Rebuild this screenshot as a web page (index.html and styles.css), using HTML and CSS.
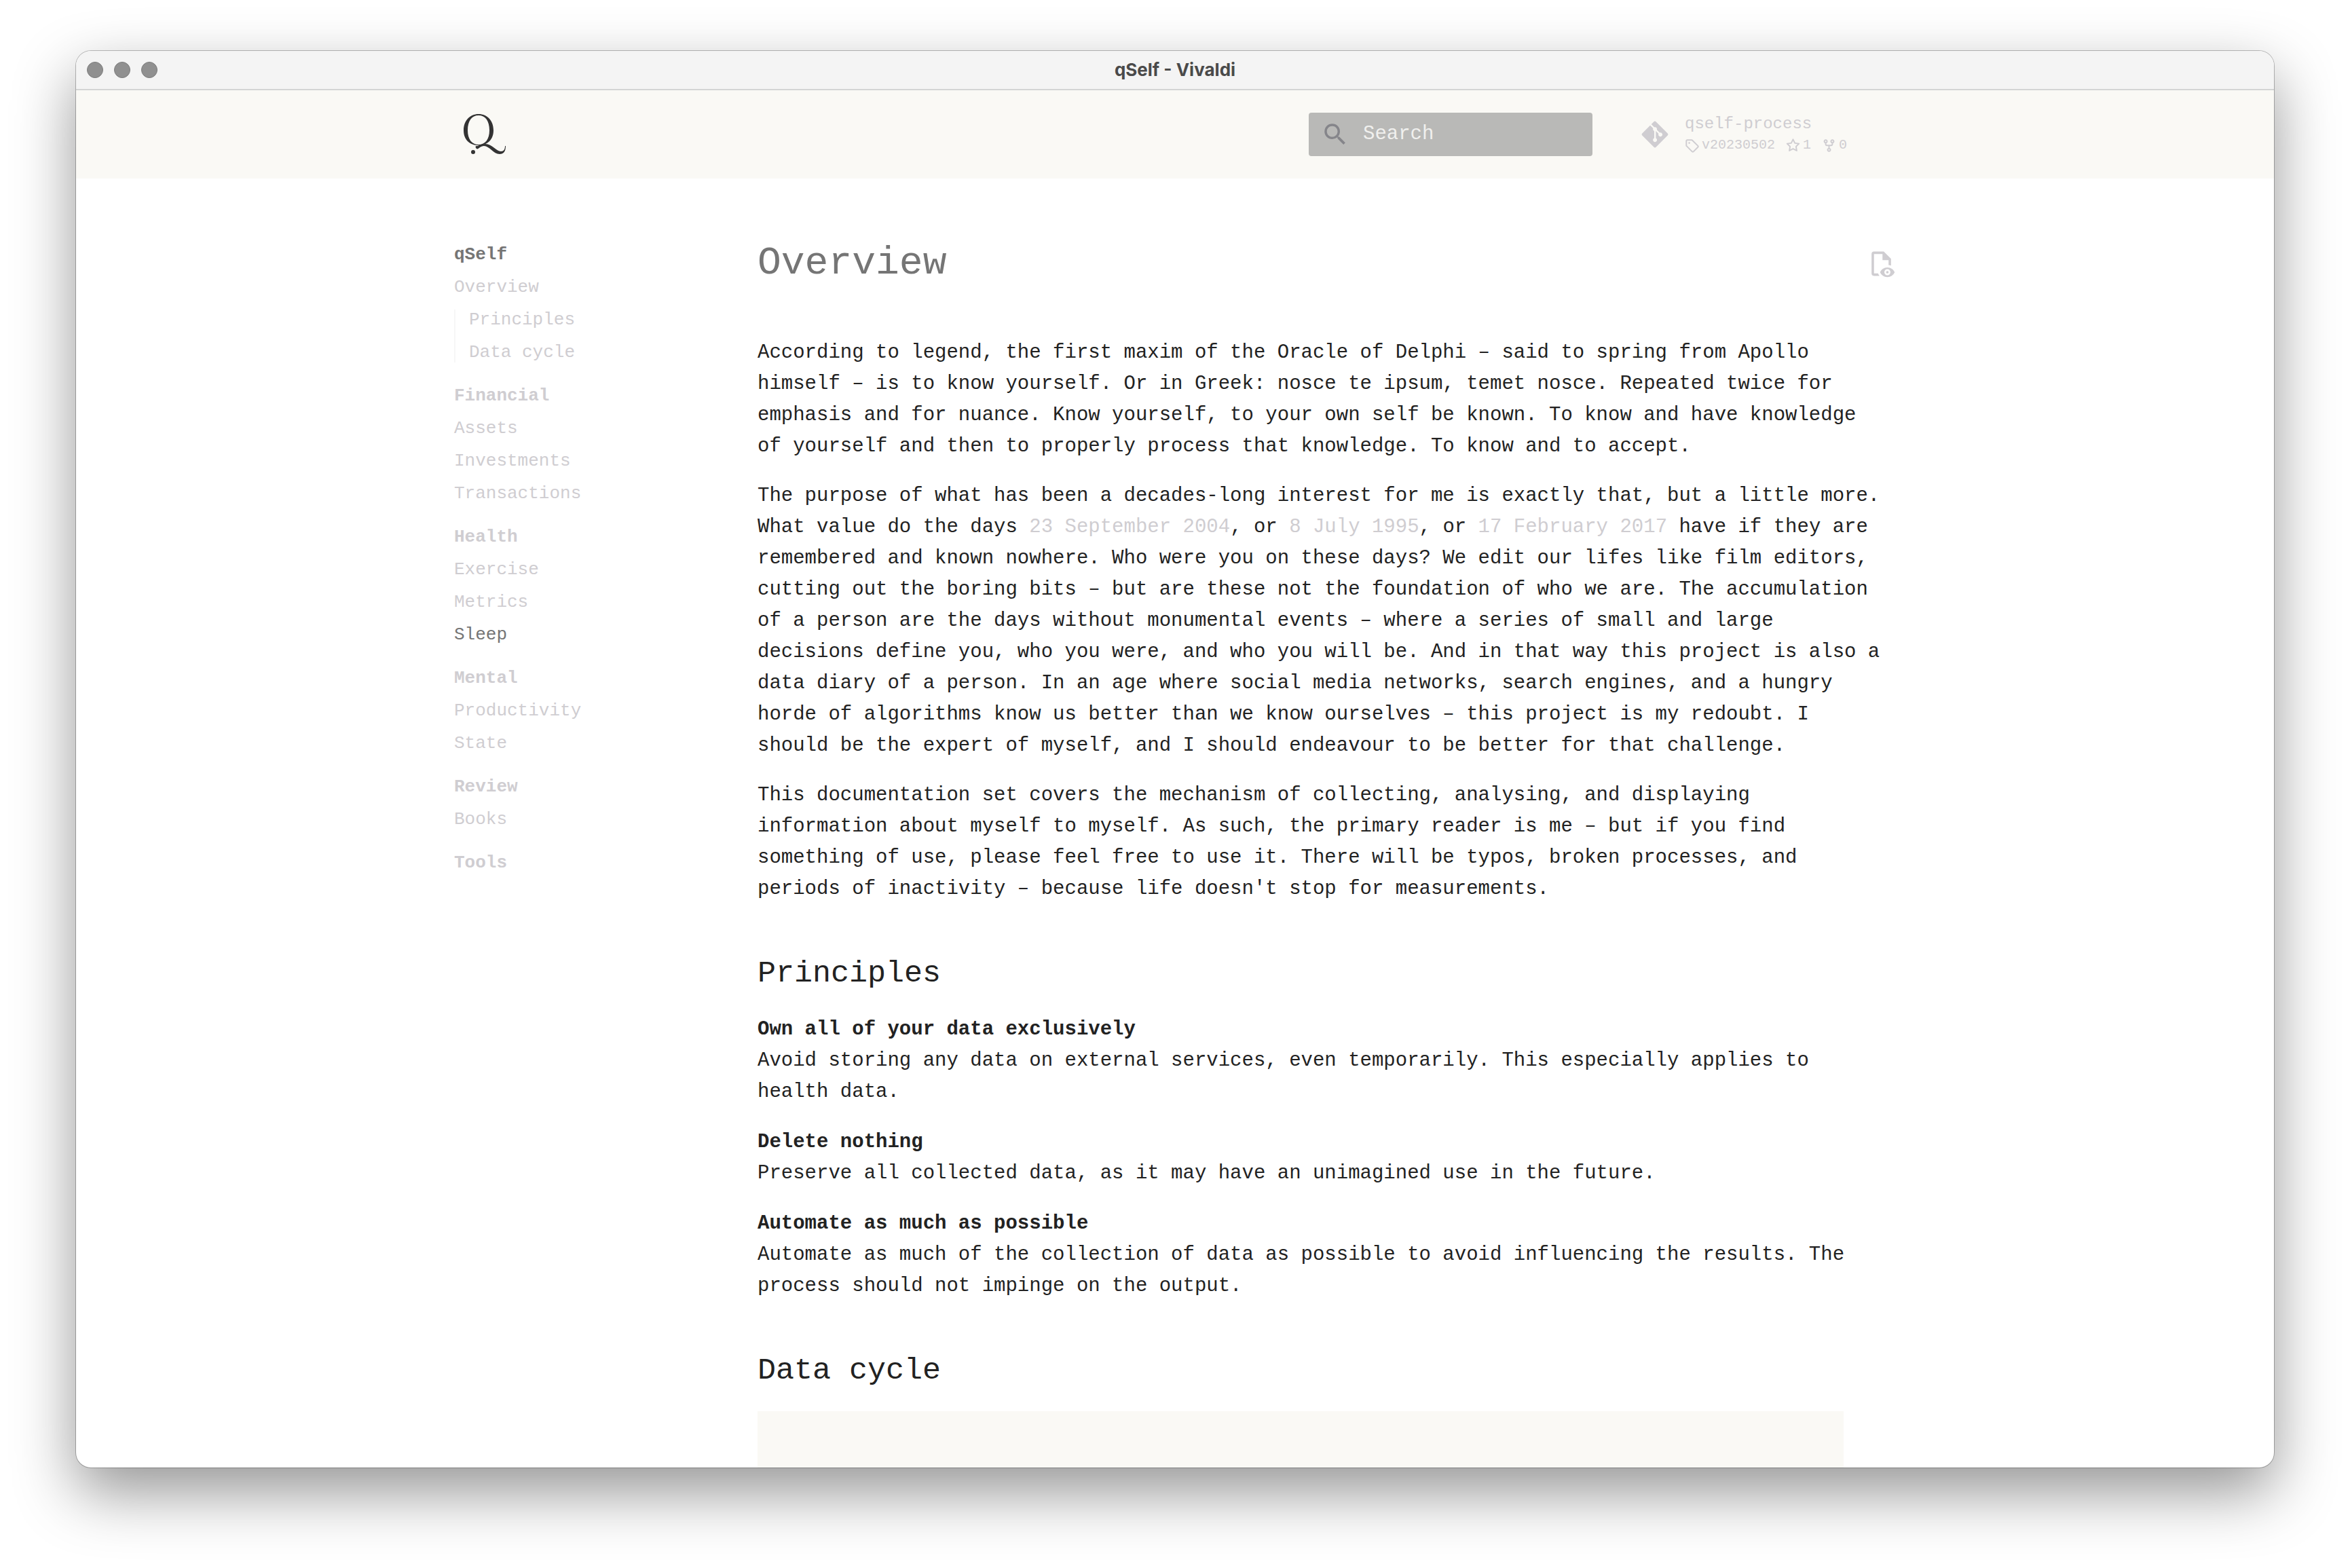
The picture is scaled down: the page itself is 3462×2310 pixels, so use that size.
FILE: index.html
```html
<!DOCTYPE html>
<html lang="en">
<head>
<meta charset="utf-8">
<meta name="viewport" content="width=device-width, initial-scale=1">
<title>qSelf</title>
<link rel="stylesheet" href="styles.css">
</head>
<body>
<div class="window">
  <div class="titlebar">
    <div class="lights">
      <button class="light" type="button" aria-label="Close"></button>
      <button class="light" type="button" aria-label="Minimise"></button>
      <button class="light" type="button" aria-label="Zoom"></button>
    </div>
    <div class="window-title">qSelf - Vivaldi</div>
  </div>

  <header class="header">
    <div class="container header-inner">
      <a class="logo" href="#" aria-label="qSelf">
        <svg viewBox="0 0 64 60" width="64" height="60" aria-hidden="true">
          <path fill-rule="evenodd" d="M23 0C36 0 45 10 45 24C45 38 36 46 23 46C10 46 1 38 1 24C1 10 10 0 23 0ZM23 2C13 2 7 10 7 24C7 37 13 45 23 45C33 45 39 37 39 24C39 10 33 2 23 2Z"/>
          <path d="M19 47C22 48 25 44 33 44C43 44 49 55 56 55C60 55 62 52 62 47L63 47C63 55 60 59 54 59C45 59 39 47 31 47C26 47 24 51 21 51.500C19 51 18 49 19 47Z"/>
          <circle cx="15" cy="56" r="3"/>
        </svg>
      </a>
      <form class="search" role="search">
        <svg class="search-icon" viewBox="0 0 24 24" aria-hidden="true"><path d="M9.500 3A6.500 6.500 0 0 1 16 9.500c0 1.610-.59 3.090-1.560 4.230l.27.27h.79l5 5-1.500 1.500-5-5v-.79l-.27-.27A6.516 6.516 0 0 1 9.500 16 6.500 6.500 0 0 1 3 9.500 6.500 6.500 0 0 1 9.500 3m0 2C7 5 5 7 5 9.500S7 14 9.500 14 14 12 14 9.500 12 5 9.500 5z"/></svg>
        <input class="search-input" type="search" placeholder="Search" aria-label="Search">
      </form>
      <a class="repo" href="#">
        <svg class="repo-icon" viewBox="0 0 448 512" aria-hidden="true"><path d="M439.550 236.050 244 40.450a28.870 28.870 0 0 0-40.810 0l-40.660 40.630 51.520 51.520c27.060-9.140 52.680 16.770 43.390 43.680l49.660 49.660c34.230-11.800 61.180 31 35.470 56.690-26.490 26.490-70.210-2.870-56-37.340L240.220 199v121.850c25.300 12.540 22.260 41.850 9.080 55a34.340 34.340 0 0 1-48.550 0c-17.570-17.600-11.070-46.910 11.250-56v-123c-20.800-8.510-24.600-30.740-18.640-45L142.570 101 8.450 235.140a28.860 28.860 0 0 0 0 40.810l195.610 195.600a28.860 28.860 0 0 0 40.800 0l194.690-194.690a28.860 28.860 0 0 0 0-40.810z"/></svg>
        <span class="repo-info">
          <span class="repo-name">qself-process</span>
          <span class="facts">
            <span class="fact"><svg class="fact-icon" viewBox="0 0 16 16" aria-hidden="true"><path fill-rule="evenodd" d="M2.500 7.775V2.750a.25.25 0 0 1 .25-.25h5.025a.25.25 0 0 1 .177.073l6.250 6.250a.25.25 0 0 1 0 .354l-5.025 5.025a.25.25 0 0 1-.354 0l-6.250-6.250a.25.25 0 0 1-.073-.177zm-1.500 0V2.750C1 1.784 1.784 1 2.750 1h5.025c.464 0 .91.184 1.238.513l6.250 6.250a1.750 1.750 0 0 1 0 2.474l-5.026 5.026a1.750 1.750 0 0 1-2.474 0l-6.250-6.250A1.750 1.750 0 0 1 1 7.775zM6 5a1 1 0 1 1-2 0 1 1 0 0 1 2 0z"/></svg>v20230502</span>
            <span class="fact"><svg class="fact-icon" viewBox="0 0 16 16" aria-hidden="true"><path fill-rule="evenodd" d="M8 .25a.75.75 0 0 1 .673.418l1.882 3.815 4.210.612a.75.75 0 0 1 .416 1.279l-3.046 2.970.719 4.192a.75.75 0 0 1-1.088.791L8 12.347l-3.766 1.980a.75.75 0 0 1-1.088-.79l.72-4.194L.818 6.374a.75.75 0 0 1 .416-1.280l4.210-.611L7.327.668A.75.75 0 0 1 8 .25zm0 2.445L6.615 5.500a.75.75 0 0 1-.564.41l-3.097.45 2.240 2.184a.75.75 0 0 1 .216.664l-.528 3.084 2.769-1.456a.75.75 0 0 1 .698 0l2.770 1.456-.53-3.084a.75.75 0 0 1 .216-.664l2.240-2.183-3.096-.45a.75.75 0 0 1-.564-.41L8 2.694v.001z"/></svg>1</span>
            <span class="fact"><svg class="fact-icon" viewBox="0 0 16 16" aria-hidden="true"><path fill-rule="evenodd" d="M5 3.250a.75.75 0 1 1-1.500 0 .75.75 0 0 1 1.500 0zm0 2.122a2.250 2.250 0 1 0-1.500 0v.878A2.250 2.250 0 0 0 5.750 8.500h1.500v2.128a2.251 2.251 0 1 0 1.500 0V8.500h1.500a2.250 2.250 0 0 0 2.250-2.250v-.878a2.250 2.250 0 1 0-1.500 0v.878a.75.75 0 0 1-.75.75h-4.500A.75.75 0 0 1 5 6.250v-.878zm3.750 7.378a.75.75 0 1 1-1.500 0 .75.75 0 0 1 1.500 0zm3-8.750a.75.75 0 1 0 0-1.500.75.75 0 0 0 0 1.500z"/></svg>0</span>
          </span>
        </span>
      </a>
    </div>
  </header>

  <div class="container page">
    <nav class="nav" aria-label="Documentation">
      <section class="nav-group">
        <a class="nav-heading nav-current" href="#">qSelf</a>
        <a href="#overview">Overview</a>
        <div class="nav-toc">
          <a href="#principles">Principles</a>
          <a href="#data-cycle">Data cycle</a>
        </div>
      </section>
      <section class="nav-group">
        <a class="nav-heading" href="#">Financial</a>
        <a href="#">Assets</a>
        <a href="#">Investments</a>
        <a href="#">Transactions</a>
      </section>
      <section class="nav-group">
        <a class="nav-heading" href="#">Health</a>
        <a href="#">Exercise</a>
        <a href="#">Metrics</a>
        <a class="nav-current" href="#">Sleep</a>
      </section>
      <section class="nav-group">
        <a class="nav-heading" href="#">Mental</a>
        <a href="#">Productivity</a>
        <a href="#">State</a>
      </section>
      <section class="nav-group">
        <a class="nav-heading" href="#">Review</a>
        <a href="#">Books</a>
      </section>
      <section class="nav-group">
        <a class="nav-heading" href="#">Tools</a>
      </section>
    </nav>

    <main class="article">
      <div class="title-row">
        <h1 id="overview">Overview</h1>
        <a class="source-link" href="#" aria-label="View source of this page">
          <svg viewBox="0 0 24 24" width="43" height="43" aria-hidden="true"><path d="M17 18c.56 0 1 .44 1 1s-.44 1-1 1-1-.44-1-1 .44-1 1-1m0-3c-2.730 0-5.060 1.660-6 4 .94 2.340 3.270 4 6 4s5.060-1.660 6-4c-.94-2.340-3.270-4-6-4m0 6.500a2.500 2.500 0 0 1-2.500-2.500 2.500 2.500 0 0 1 2.500-2.500 2.500 2.500 0 0 1 2.500 2.500 2.500 2.500 0 0 1-2.500 2.500M9.270 20H6V4h7v5h5v4.070c.7.08 1.360.25 2 .49V8l-6-6H6a2 2 0 0 0-2 2v16a2 2 0 0 0 2 2h4.500a8.150 8.150 0 0 1-1.230-2z"/></svg>
        </a>
      </div>
      <p>According to legend, the first maxim of the Oracle of Delphi – said to spring from Apollo himself – is to know yourself. Or in Greek: nosce te ipsum, temet nosce. Repeated twice for emphasis and for nuance. Know yourself, to your own self be known. To know and have knowledge of yourself and then to properly process that knowledge. To know and to accept.</p>
      <p>The purpose of what has been a decades-long interest for me is exactly that, but a little more. What value do the days <a href="#">23 September 2004</a>, or <a href="#">8 July 1995</a>, or <a href="#">17 February 2017</a> have if they are remembered and known nowhere. Who were you on these days? We edit our lifes like film editors, cutting out the boring bits – but are these not the foundation of who we are. The accumulation of a person are the days without monumental events – where a series of small and large decisions define you, who you were, and who you will be. And in that way this project is also a data diary of a person. In an age where social media networks, search engines, and a hungry horde of algorithms know us better than we know ourselves – this project is my redoubt. I should be the expert of myself, and I should endeavour to be better for that challenge.</p>
      <p>This documentation set covers the mechanism of collecting, analysing, and displaying information about myself to myself. As such, the primary reader is me – but if you find something of use, please feel free to use it. There will be typos, broken processes, and periods of inactivity – because life doesn't stop for measurements.</p>

      <h2 id="principles">Principles</h2>
      <dl>
        <dt>Own all of your data exclusively</dt>
        <dd>Avoid storing any data on external services, even temporarily. This especially applies to health data.</dd>
        <dt>Delete nothing</dt>
        <dd>Preserve all collected data, as it may have an unimagined use in the future.</dd>
        <dt>Automate as much as possible</dt>
        <dd>Automate as much of the collection of data as possible to avoid influencing the results. The process should not impinge on the output.</dd>
      </dl>

      <h2 id="data-cycle">Data cycle</h2>
      <figure class="diagram"></figure>
    </main>
  </div>
</div>
</body>
</html>
```
FILE: styles.css
```css
* {
  box-sizing: border-box;
}

:root {
  --cream: #faf9f5;
  --ink: #222222;
  --muted: #757575;
  --faint: #cfcdd1;
  --mono: "Liberation Mono", monospace;
}

body {
  display: flex;
  flex-direction: column;
  min-height: 100vh;
  margin: 0;
  padding: 75px 112px 148px;
  background: #ffffff;
  color: var(--ink);
  font-family: var(--mono);
  font-size: 29px;
  line-height: 46px;
}

a {
  color: var(--faint);
  text-decoration: none;
}

svg {
  display: block;
  fill: currentColor;
}

.window {
  display: flex;
  flex: 1;
  flex-direction: column;
  overflow: hidden;
  border-radius: 22px;
  background: #ffffff;
  box-shadow: 0 0 0 1px rgba(0, 0, 0, 0.25), 0 36px 90px rgba(0, 0, 0, 0.42);
}

.titlebar {
  display: grid;
  grid-template-columns: 1fr auto 1fr;
  align-items: center;
  height: 58px;
  padding: 0 16px;
  border-bottom: 2px solid #d4d4d4;
  background: #f4f4f4;
}

.lights {
  display: flex;
  gap: 16px;
}

.light {
  width: 24px;
  height: 24px;
  padding: 0;
  border: 1px solid #7c7c7c;
  border-radius: 50%;
  background: #909090;
}

.window-title {
  color: #4a4a4a;
  font-family: Inter, sans-serif;
  font-size: 26px;
  font-weight: 700;
  line-height: 32px;
}

.container {
  width: 100%;
  max-width: 2124px;
  margin: 0 auto;
}

.header {
  background: var(--cream);
}

.header-inner {
  display: flex;
  align-items: center;
  height: 130px;
}

.logo {
  margin-right: auto;
  padding-left: 13px;
  color: #333333;
}

.search {
  display: flex;
  align-items: center;
  gap: 20px;
  width: 418px;
  height: 64px;
  padding: 0 18px;
  border-radius: 4px;
  background: #b9b9b7;
}

.search-icon {
  flex: none;
  width: 42px;
  height: 42px;
  color: #85858a;
}

.search-input {
  flex: 1;
  min-width: 0;
  padding: 0;
  border: 0;
  outline: 0;
  background: transparent;
  color: #f0f0ee;
  font: inherit;
}

.search-input::placeholder {
  color: #f0f0ee;
  opacity: 1;
}

.repo {
  display: flex;
  align-items: center;
  gap: 24px;
  width: 375px;
  margin-left: 72px;
}

.repo-icon {
  flex: none;
  width: 40px;
  height: 44px;
}

.repo-info {
  display: flex;
  flex-direction: column;
}

.repo-name {
  font-size: 24px;
  line-height: 32px;
}

.facts {
  display: flex;
  gap: 16px;
  font-size: 20px;
  line-height: 30px;
}

.fact {
  display: flex;
  align-items: center;
  gap: 4px;
}

.fact-icon {
  width: 21px;
  height: 21px;
}

.page {
  display: grid;
  flex: 1;
  grid-template-columns: 447px minmax(0, 1fr);
}

.nav {
  display: flex;
  flex-direction: column;
  gap: 34px;
  padding-top: 97px;
  font-size: 26px;
  line-height: 30px;
}

.nav-group,
.nav-toc {
  display: flex;
  flex-direction: column;
  gap: 18px;
}

.nav-toc {
  padding-left: 20px;
  border-left: 2px solid #f6f6f6;
}

.nav-heading {
  font-weight: 700;
}

.nav .nav-current {
  color: var(--muted);
}

.article {
  display: flex;
  flex-direction: column;
  padding-top: 87px;
}

.title-row {
  display: flex;
  align-items: center;
  justify-content: space-between;
  margin-bottom: 71px;
}

h1,
h2,
p,
dl,
dd,
figure {
  margin: 0;
}

h1 {
  color: var(--muted);
  font-size: 58px;
  font-weight: 400;
  line-height: 76px;
}

h2 {
  margin: 71px 0 28px;
  font-size: 45px;
  font-weight: 400;
  line-height: 62px;
}

p,
dl {
  max-width: 1664px;
}

p + p {
  margin-top: 27px;
}

dd + dt {
  margin-top: 28px;
}

dt {
  font-weight: 700;
}

.diagram {
  flex: 1;
  max-width: 1600px;
  min-height: 78px;
  background: var(--cream);
}
```
